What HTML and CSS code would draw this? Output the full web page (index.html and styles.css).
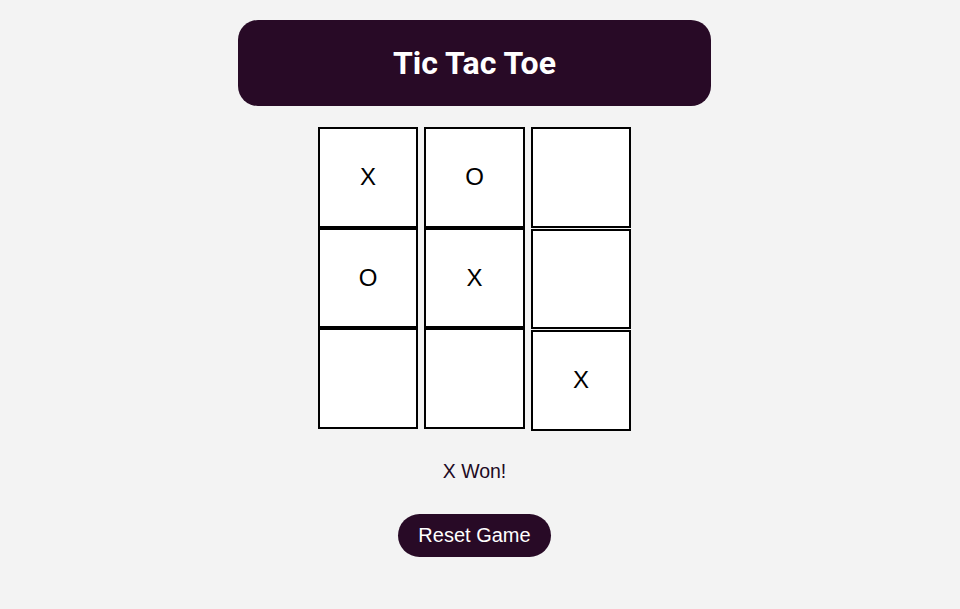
FILE: index.html
```html
<!DOCTYPE html>
<html>
<head>
<meta charset="utf-8">
<link rel="stylesheet" href="styles.css">
</head>
<body>
<main class="app">
  <header class="title-bar"><h1>Tic Tac Toe</h1></header>
  <section class="board">
    <div class="col">
      <div class="cell">X</div>
      <div class="cell">O</div>
      <div class="cell"></div>
    </div>
    <div class="col">
      <div class="cell">O</div>
      <div class="cell">X</div>
      <div class="cell"></div>
    </div>
    <div class="col col-spaced">
      <div class="cell"></div>
      <div class="cell"></div>
      <div class="cell">X</div>
    </div>
  </section>
  <p class="status">X Won!</p>
  <button class="reset">Reset Game</button>
</main>
</body>
</html>
```
FILE: styles.css
```css
html, body {
  margin: 0;
  padding: 0;
  background: #f3f3f3;
}
body {
  font-family: "Liberation Sans", Arial, sans-serif;
}
.app {
  width: 949px;
  display: flex;
  flex-direction: column;
  align-items: center;
  padding-top: 20px;
}
.title-bar {
  width: 473px;
  height: 86px;
  box-sizing: border-box;
  background: #280a26;
  border-radius: 20px;
  display: flex;
  align-items: center;
  justify-content: center;
}
.title-bar h1 {
  margin: 0;
  color: #ffffff;
  font-family: Roboto, "Liberation Sans", sans-serif;
  font-weight: 700;
  font-size: 32px;
}
.board {
  display: flex;
  align-items: flex-start;
  gap: 6px;
  margin-top: 21px;
}
.col {
  display: flex;
  flex-direction: column;
}
.col-spaced {
  gap: 1px;
}
.cell {
  width: 100.5px;
  height: 100.5px;
  box-sizing: border-box;
  border: 2px solid #000;
  background: #fff;
  display: flex;
  align-items: center;
  justify-content: center;
  font-size: 24px;
  color: #000;
}
.status {
  margin: 29px 0 0;
  font-size: 19.5px;
  line-height: 22px;
  color: #1e0a24;
}
.reset {
  margin-top: 32px;
  width: 153px;
  height: 43px;
  border: none;
  border-radius: 22px;
  background: #280a26;
  color: #fff;
  font-family: "Liberation Sans", Arial, sans-serif;
  font-size: 20px;
  padding: 0;
  cursor: pointer;
}
```
